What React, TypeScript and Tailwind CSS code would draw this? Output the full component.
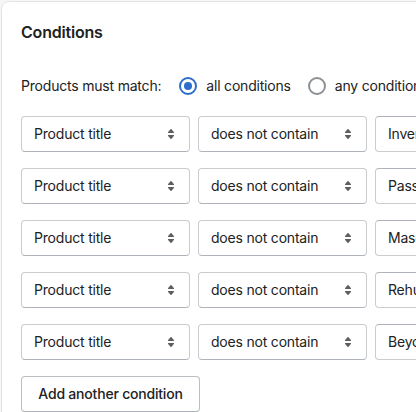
import React from "react";

const Chevron = () => (
  <svg viewBox="0 0 20 20" className="w-5 h-5 shrink-0" fill="#5c5f62">
    <path d="M7.676 9h4.648c.563 0 .879-.603.53-1.014l-2.323-2.746a.708.708 0 0 0-1.062 0l-2.324 2.746c-.347.411-.032 1.014.531 1.014Zm4.648 2h-4.648c-.563 0-.878.603-.53 1.014l2.323 2.746c.27.32.792.32 1.062 0l2.323-2.746c.349-.411.033-1.014-.53-1.014Z" />
  </svg>
);

const SelectBox = ({ label, width }: { label: string; width: string }) => (
  <div
    className={`${width} h-9 shrink-0 flex items-center justify-between pl-3 pr-2 rounded-[4px] border border-[#c9cccf] border-b-[#aeb4b9] bg-white text-sm text-[#202223]`}
  >
    <span>{label}</span>
    <Chevron />
  </div>
);

const rows = ["Inventory", "Passport", "Mascara", "Rehuman", "Beyond"];

export default function App() {
  return (
    <div
      className="w-[416px] h-[412px] overflow-hidden bg-[#f6f6f7] tracking-[-0.2px]"
      style={{ fontFamily: "Inter, 'Noto Sans', sans-serif" }}
    >
      <div className="ml-px mt-px w-[600px] bg-white rounded-lg border border-[#e1e3e5] pl-[19px] pt-[18px] pb-5 text-[#202223]">
        <h2 className="text-base leading-6 font-semibold">Conditions</h2>
        <div className="mt-8 flex items-center h-5 text-sm">
          <span>Products must match:</span>
          <label className="ml-[18px] flex items-center">
            <span className="w-[18px] h-[18px] rounded-full border-2 border-[#2c6ecb] flex items-center justify-center">
              <span className="w-2 h-2 rounded-full bg-[#2c6ecb]" />
            </span>
            <span className="ml-[9px]">all conditions</span>
          </label>
          <label className="ml-[17px] flex items-center">
            <span className="w-[18px] h-[18px] rounded-full border-2 border-[#8c9196]" />
            <span className="ml-[9px]">any conditions</span>
          </label>
        </div>
        <div className="mt-5 flex flex-col gap-4">
          {rows.map((r) => (
            <div key={r} className="flex gap-2">
              <SelectBox label="Product title" width="w-[169px]" />
              <SelectBox label="does not contain" width="w-[169px]" />
              <div className="w-[200px] h-9 flex items-center px-3 rounded-[4px] border border-[#c9cccf] border-t-[#aeb4b9] text-sm">
                {r}
              </div>
            </div>
          ))}
          <div>
            <button className="w-[179px] h-9 flex items-center justify-center rounded-[4px] border border-[#babfc3] border-b-[#aeb4b9] bg-white text-sm font-medium text-[#202223] shadow-[0_1px_0_rgba(0,0,0,0.05)]">
              Add another condition
            </button>
          </div>
        </div>
      </div>
    </div>
  );
}
